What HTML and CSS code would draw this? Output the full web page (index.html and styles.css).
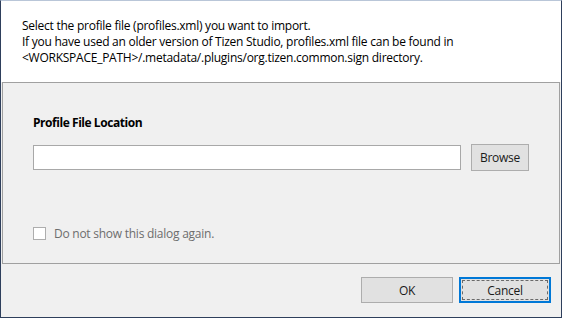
FILE: index.html
```html
<!DOCTYPE html>
<html lang="en">
<head>
  <meta charset="UTF-8" />
  <title>Import Profile</title>
  <link rel="stylesheet" href="styles.css">
</head>
<body>
  <div class="dialog">
    <div class="header">
      <p>Select the profile file (profiles.xml) you want to import.</p>
      <p>If you have used an older version of Tizen Studio, profiles.xml file can be found in</p>
      <p>&lt;WORKSPACE_PATH&gt;/.metadata/.plugins/org.tizen.common.sign directory.</p>
    </div>

    <div class="panel">
      <div class="field-title">Profile File Location</div>
      <div class="file-row">
        <input type="text" class="file-input" />
        <button class="btn browse-btn">Browse</button>
      </div>
      <label class="check-row">
        <span class="check-box"></span>
        <span class="check-text">Do not show this dialog again.</span>
      </label>
    </div>

    <div class="footer">
      <button class="btn action-btn">OK</button>
      <button class="btn action-btn default-btn">Cancel</button>
    </div>
  </div>
</body>
</html>
```

FILE: styles.css
```css
 body {
   margin: 0;
   font-family: 'Open Sans', 'Noto Sans', sans-serif;
   font-size: 12px;
   letter-spacing: -0.25px;
   color: #000;
   background: #f0f0f0;
 }
 .dialog {
   width: 562px;
   height: 318px;
   box-sizing: border-box;
   border: 1px solid #2e3f5c;
   border-top-color: #b9c6d8;
   background: #f0f0f0;
   display: flex;
   flex-direction: column;
 }

 .header {
   background: #ffffff;
   height: 81px;
   box-sizing: border-box;
   padding: 17px 0 0 21px;
 }
 .header p {
   margin: 0;
   line-height: 16px;
 }

 .panel {
   height: 182px;
   box-sizing: border-box;
   margin: 0 1px;
   border: 1px solid #a0a0a0;
   background: #f0f0f0;
   padding: 32px 0 0 30px;
 }
 .field-title {
   font-weight: 700;
   letter-spacing: -0.45px;
   line-height: 16px;
 }
 .file-row {
   display: flex;
   align-items: center;
   gap: 10px;
   margin-top: 13px;
 }
 .file-input {
   width: 428px;
   height: 25px;
   box-sizing: border-box;
   margin: 0;
   border: 1px solid #a8a8a8;
   background: #ffffff;
   outline: none;
 }

 .btn {
   font-family: inherit;
   font-size: 12px;
   letter-spacing: -0.25px;
   color: #1a1a1a;
   background: #e1e1e1;
   border: 1px solid #adadad;
   box-sizing: border-box;
   margin: 0;
   padding: 0;
 }
 .browse-btn {
   width: 58px;
   height: 27px;
 }

 .check-row {
   display: flex;
   align-items: center;
   gap: 8px;
   margin-top: 55px;
   height: 15px;
 }
 .check-box {
   width: 13px;
   height: 13px;
   box-sizing: border-box;
   border: 1px solid #adadad;
   background: #ffffff;
 }
 .check-text {
   color: #6d6d6d;
 }

 .footer {
   flex: 1;
   display: flex;
   justify-content: flex-end;
   align-items: flex-start;
   gap: 6px;
   padding: 13px 10px 0 0;
 }
 .action-btn {
   width: 92px;
   height: 26px;
 }
 .default-btn {
   border: 2px solid #0078d7;
   outline: 1px dashed #6a6a6a;
   outline-offset: -4px;
 }
```
